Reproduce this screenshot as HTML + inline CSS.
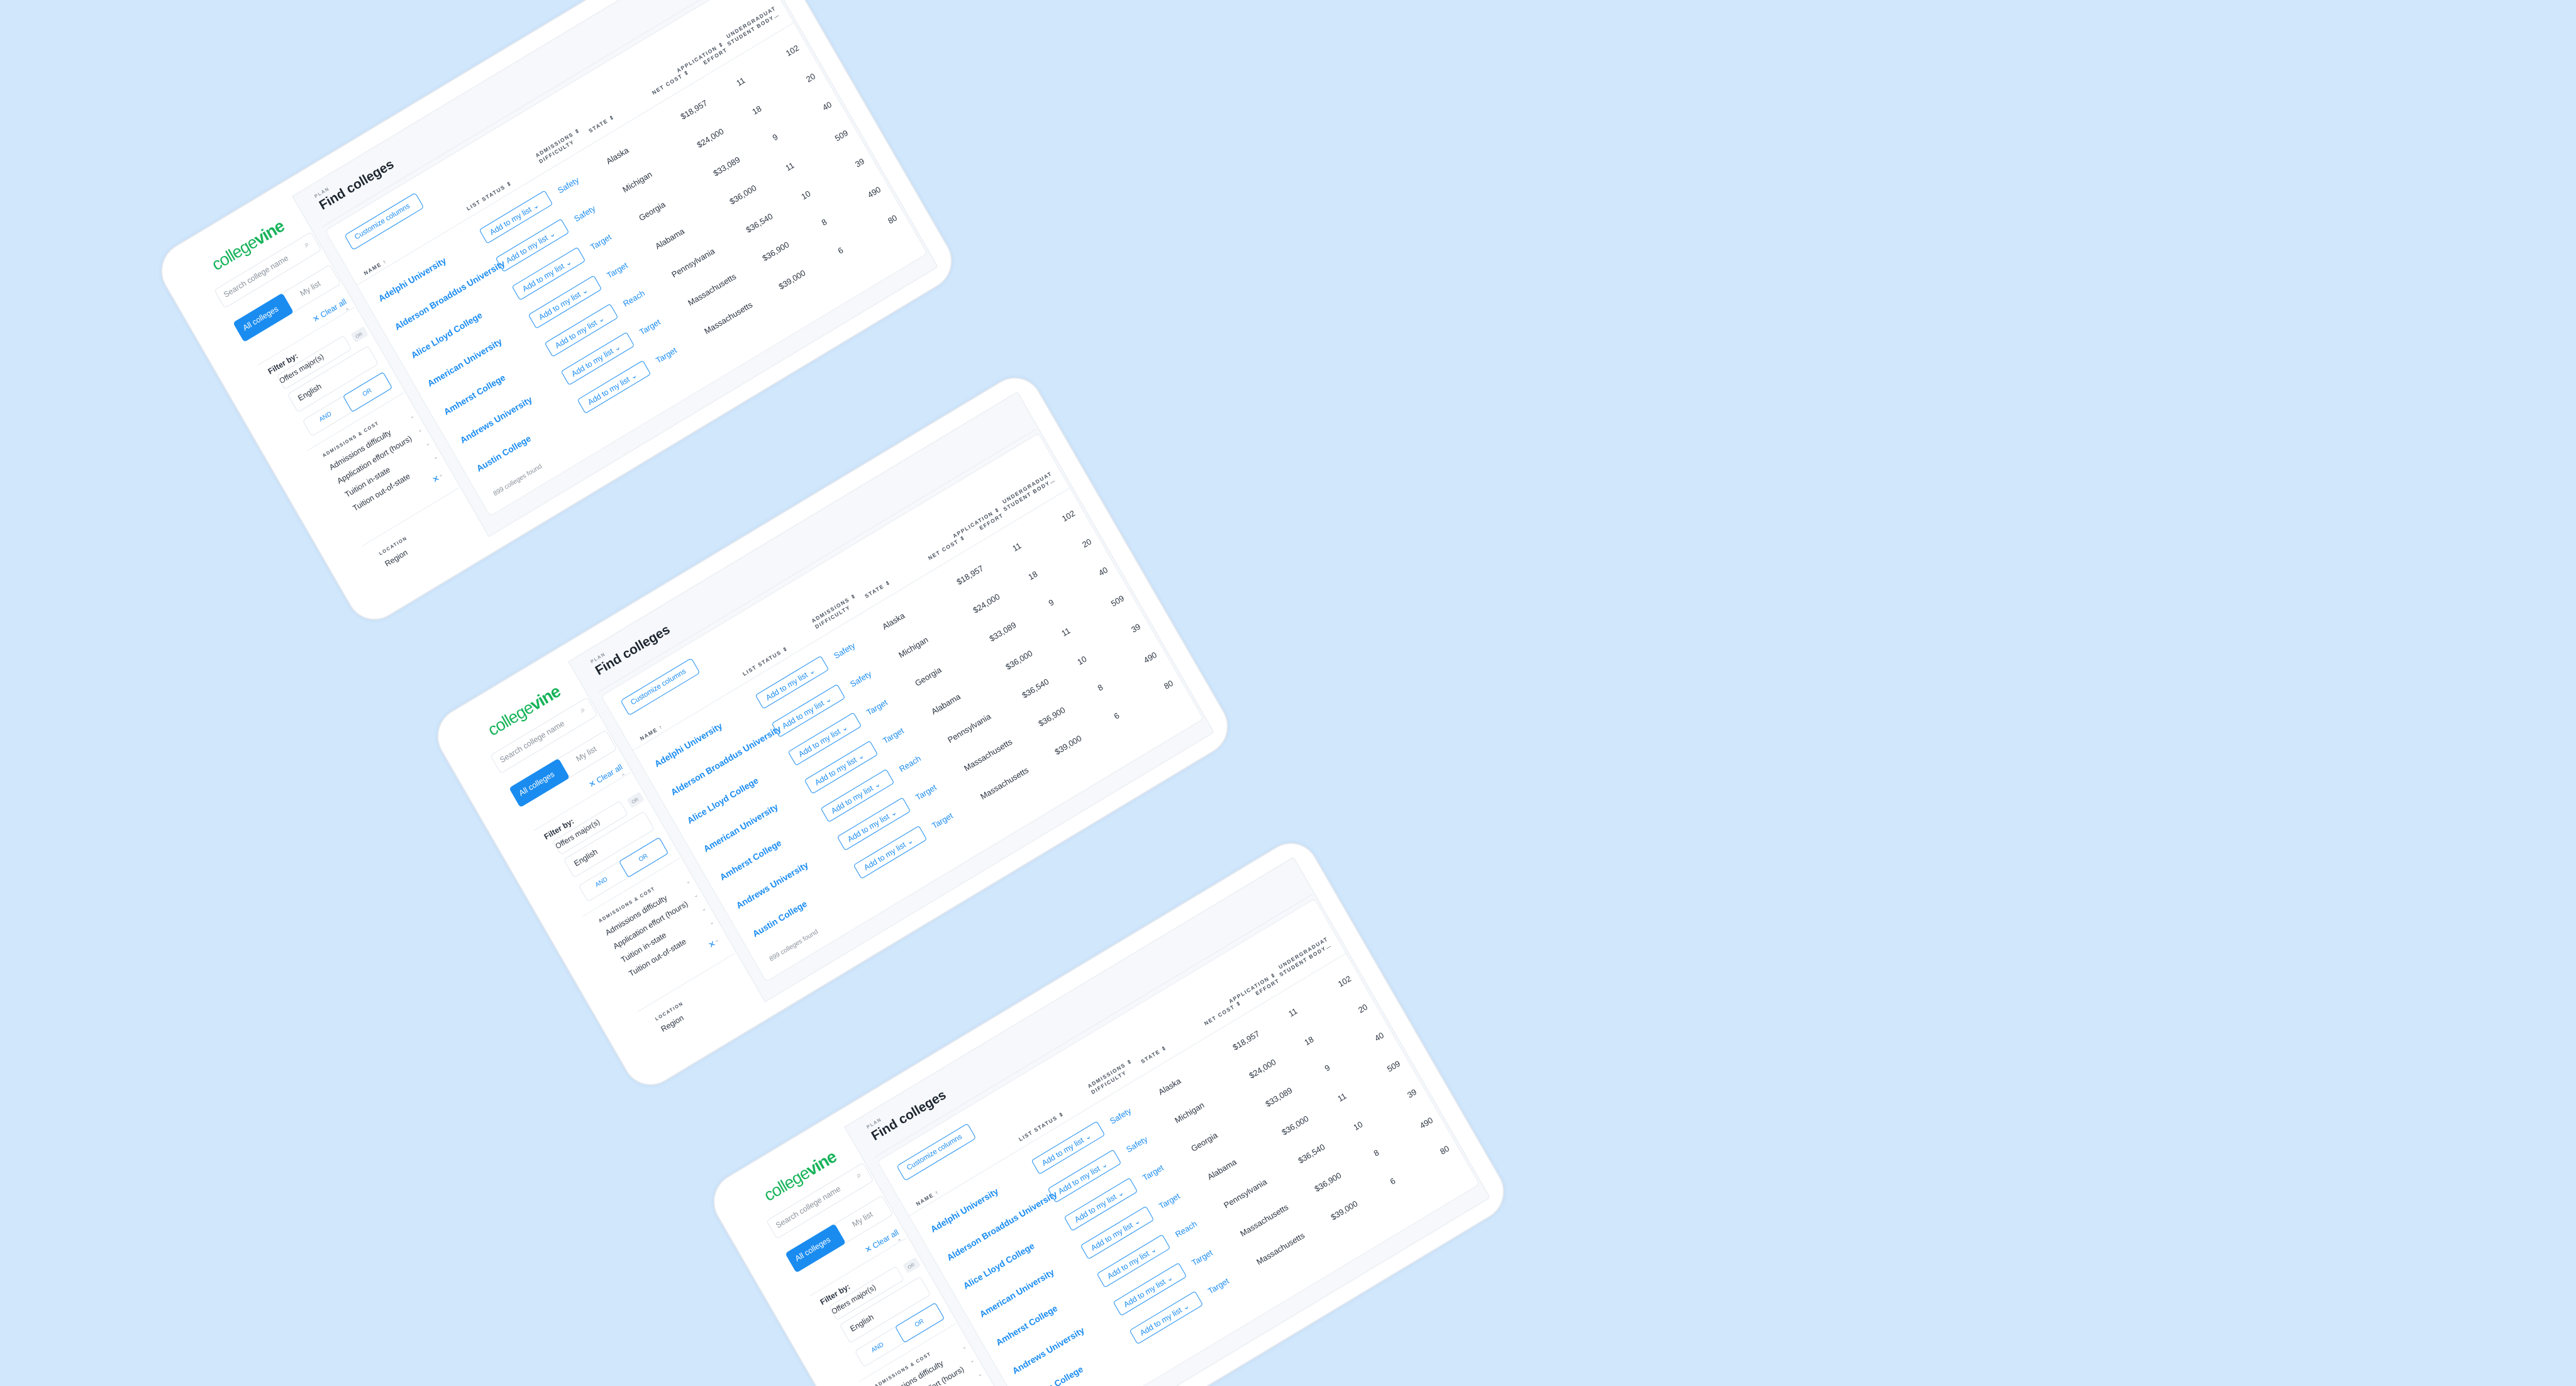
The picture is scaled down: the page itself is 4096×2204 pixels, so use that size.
<!DOCTYPE html>
<html style="width:4096px;height:2204px;overflow:hidden"><head><meta charset="utf-8">
<style>
*{box-sizing:border-box;margin:0;padding:0}
body{width:4096px;height:2204px;background:#d0e7fc;overflow:hidden;position:relative;font-family:"Liberation Sans",sans-serif}
.card{position:absolute;width:1110px;height:680px;background:#fff;border:2px solid #e2e7ee;border-radius:46px;transform:matrix(0.857,-0.515,0.5,0.866,0,0);transform-origin:center;box-shadow:0 0 6px rgba(120,150,190,.15)}
.card *{position:absolute;white-space:nowrap}
.scr{left:30px;top:26px;width:1048px;height:626px;background:#f6f8fb;border:1px solid #e5eaf0;border-radius:4px}
.side{left:30px;top:26px;width:215px;height:626px;background:#fff;border-right:1px solid #e5eaf0}
.panel{left:262px;top:100px;width:812px;height:525px;background:#fff;border:1px solid #e8edf2;border-radius:6px}
.b{color:#1a8cf0}
.t{font-size:14px;color:#2a3340}
.h{font-size:8.5px;letter-spacing:1.5px;color:#4a5360;font-weight:bold;line-height:11px}
.btn{width:122px;height:26px;border:1.5px solid #1a8cf0;border-radius:4px;color:#1a8cf0;font-size:12.5px;padding:5px 0 0 12px}
.inp{border:1px solid #e2e7ee;border-radius:5px}
.line{height:1px;background:#e8edf2}
.r{text-align:right}
</style></head><body>

<div class="card" style="left:330px;top:83px">
<div class="scr"></div><div class="side"></div><div class="panel"></div>
<div style="left:80px;top:42px;font-size:27px;color:#17b35a;letter-spacing:-1px">college<b>vine</b></div>
<div class="inp" style="left:62px;top:90px;width:180px;height:34px"></div>
<div style="left:72px;top:99px;font-size:12.5px;color:#8a929c">Search college name</div>
<div style="left:222px;top:96px;font-size:13px;color:#9aa3ad">⌕</div>
<div class="inp" style="left:62px;top:150px;width:180px;height:36px"></div>
<div style="left:62px;top:150px;width:92px;height:36px;background:#1a8cf0;border-radius:5px;color:#fff;font-size:12.5px;padding:10px 0 0 10px">All colleges</div>
<div style="left:178px;top:160px;font-size:12.5px;color:#8a929c">My list</div>
<div class="b" style="left:175px;top:205px;font-size:12.5px">✕ Clear all</div>
<div style="left:228px;top:222px;font-size:9px;color:#9aa3ad">^</div>
<div class="line" style="left:62px;top:228px;width:180px"></div>
<div style="left:72px;top:240px;font-size:12.5px;font-weight:bold;color:#2a3340">Filter by:</div>
<div style="left:80px;top:262px;font-size:12px;color:#2a3340">Offers major(s)</div>
<div class="inp" style="left:80px;top:258px;width:125px;height:26px"></div>
<div style="left:215px;top:262px;width:24px;height:16px;background:#eef1f5;border-radius:3px;font-size:7.5px;color:#8a929c;padding:4px 0 0 5px">OR</div>
<div class="inp" style="left:80px;top:292px;width:150px;height:34px"></div>
<div style="left:92px;top:301px;font-size:12.5px;color:#2a3340">English</div>
<div class="inp" style="left:80px;top:340px;width:150px;height:30px"></div>
<div style="left:155px;top:340px;width:75px;height:30px;border:1.5px solid #1a8cf0;border-radius:4px;color:#1a8cf0;font-size:10px;padding:9px 0 0 28px">OR</div>
<div class="b" style="left:104px;top:349px;font-size:10px">AND</div>
<div class="line" style="left:62px;top:385px;width:180px"></div>
<div class="h" style="left:80px;top:400px;font-size:7.5px">ADMISSIONS &amp; COST</div>
<div style="left:80px;top:416px;font-size:12.5px;color:#2a3340;line-height:25px">Admissions difficulty<br>Application effort (hours)<br>Tuition in-state<br>Tuition out-of-state</div>
<div style="left:230px;top:412px;font-size:9px;color:#9aa3ad;line-height:25px">⌄<br>⌄<br>⌄<br>⌄</div>
<div class="b" style="left:212px;top:522px;font-size:13px">✕ <span style="font-size:9px;color:#9aa3ad">⌄</span></div>
<div class="line" style="left:62px;top:560px;width:180px"></div>
<div class="h" style="left:80px;top:580px;font-size:7.5px">LOCATION</div>
<div style="left:80px;top:598px;font-size:12.5px;color:#2a3340">Region</div>
<div class="h" style="left:275px;top:40px;font-size:7.5px;color:#8a929c">PLAN</div>
<div style="left:275px;top:52px;font-size:21px;font-weight:bold;color:#1e2630">Find colleges</div>
<div class="line" style="left:262px;top:92px;width:812px"></div>
<div style="left:285px;top:122px;width:132px;height:28px;border:1.5px solid #1a8cf0;border-radius:5px;color:#1a8cf0;font-size:11.5px;padding:6px 0 0 12px">Customize columns</div>
<div class="h" style="left:282px;top:186px">NAME ↑</div>
<div class="h" style="left:475px;top:182px">LIST STATUS ⇕</div>
<div class="h" style="left:612px;top:166px">ADMISSIONS ⇕<br>DIFFICULTY</div>
<div class="h" style="left:705px;top:176px">STATE ⇕</div>
<div class="h r" style="left:800px;top:176px;width:90px">NET COST ⇕</div>
<div class="h r" style="left:840px;top:166px;width:120px">APPLICATION ⇕<br>EFFORT</div>
<div class="h r" style="left:920px;top:160px;width:140px">UNDERGRADUAT<br>STUDENT BODY…</div>
<div class="line" style="left:262px;top:200px;width:812px"></div>
<div class="b" style="left:282px;top:212px;font-size:14px;font-weight:bold;line-height:52px">Adelphi University<br>Alderson Broaddus University<br>Alice Lloyd College<br>American University<br>Amherst College<br>Andrews University<br>Austin College</div>
<div class="btn" style="left:475px;top:225px">Add to my list ⌄</div>
<div class="btn" style="left:475px;top:277px">Add to my list ⌄</div>
<div class="btn" style="left:475px;top:329px">Add to my list ⌄</div>
<div class="btn" style="left:475px;top:381px">Add to my list ⌄</div>
<div class="btn" style="left:475px;top:433px">Add to my list ⌄</div>
<div class="btn" style="left:475px;top:485px">Add to my list ⌄</div>
<div class="btn" style="left:475px;top:537px">Add to my list ⌄</div>
<div class="b" style="left:615px;top:212px;font-size:13px;line-height:52px">Safety<br>Safety<br>Target<br>Target<br>Reach<br>Target<br>Target</div>
<div class="t" style="left:705px;top:212px;font-size:13px;line-height:52px">Alaska<br>Michigan<br>Georgia<br>Alabama<br>Pennsylvania<br>Massachusetts<br>Massachusetts</div>
<div class="t r" style="left:810px;top:212px;width:80px;font-size:13px;line-height:52px">$18,957<br>$24,000<br>$33,089<br>$36,000<br>$36,540<br>$36,900<br>$39,000</div>
<div class="t r" style="left:900px;top:212px;width:60px;font-size:13px;line-height:52px">11<br>18<br>9<br>11<br>10<br>8<br>6</div>
<div class="t r" style="left:1000px;top:212px;width:60px;font-size:13px;line-height:52px">102<br>20<br>40<br>509<br>39<br>490<br>80</div>
<div style="left:285px;top:592px;font-size:10.5px;color:#8a929c">899 colleges found</div>
</div>

<div class="card" style="left:769px;top:823px">
<div class="scr"></div><div class="side"></div><div class="panel"></div>
<div style="left:80px;top:42px;font-size:27px;color:#17b35a;letter-spacing:-1px">college<b>vine</b></div>
<div class="inp" style="left:62px;top:90px;width:180px;height:34px"></div>
<div style="left:72px;top:99px;font-size:12.5px;color:#8a929c">Search college name</div>
<div style="left:222px;top:96px;font-size:13px;color:#9aa3ad">⌕</div>
<div class="inp" style="left:62px;top:150px;width:180px;height:36px"></div>
<div style="left:62px;top:150px;width:92px;height:36px;background:#1a8cf0;border-radius:5px;color:#fff;font-size:12.5px;padding:10px 0 0 10px">All colleges</div>
<div style="left:178px;top:160px;font-size:12.5px;color:#8a929c">My list</div>
<div class="b" style="left:175px;top:205px;font-size:12.5px">✕ Clear all</div>
<div style="left:228px;top:222px;font-size:9px;color:#9aa3ad">^</div>
<div class="line" style="left:62px;top:228px;width:180px"></div>
<div style="left:72px;top:240px;font-size:12.5px;font-weight:bold;color:#2a3340">Filter by:</div>
<div style="left:80px;top:262px;font-size:12px;color:#2a3340">Offers major(s)</div>
<div class="inp" style="left:80px;top:258px;width:125px;height:26px"></div>
<div style="left:215px;top:262px;width:24px;height:16px;background:#eef1f5;border-radius:3px;font-size:7.5px;color:#8a929c;padding:4px 0 0 5px">OR</div>
<div class="inp" style="left:80px;top:292px;width:150px;height:34px"></div>
<div style="left:92px;top:301px;font-size:12.5px;color:#2a3340">English</div>
<div class="inp" style="left:80px;top:340px;width:150px;height:30px"></div>
<div style="left:155px;top:340px;width:75px;height:30px;border:1.5px solid #1a8cf0;border-radius:4px;color:#1a8cf0;font-size:10px;padding:9px 0 0 28px">OR</div>
<div class="b" style="left:104px;top:349px;font-size:10px">AND</div>
<div class="line" style="left:62px;top:385px;width:180px"></div>
<div class="h" style="left:80px;top:400px;font-size:7.5px">ADMISSIONS &amp; COST</div>
<div style="left:80px;top:416px;font-size:12.5px;color:#2a3340;line-height:25px">Admissions difficulty<br>Application effort (hours)<br>Tuition in-state<br>Tuition out-of-state</div>
<div style="left:230px;top:412px;font-size:9px;color:#9aa3ad;line-height:25px">⌄<br>⌄<br>⌄<br>⌄</div>
<div class="b" style="left:212px;top:522px;font-size:13px">✕ <span style="font-size:9px;color:#9aa3ad">⌄</span></div>
<div class="line" style="left:62px;top:560px;width:180px"></div>
<div class="h" style="left:80px;top:580px;font-size:7.5px">LOCATION</div>
<div style="left:80px;top:598px;font-size:12.5px;color:#2a3340">Region</div>
<div class="h" style="left:275px;top:40px;font-size:7.5px;color:#8a929c">PLAN</div>
<div style="left:275px;top:52px;font-size:21px;font-weight:bold;color:#1e2630">Find colleges</div>
<div class="line" style="left:262px;top:92px;width:812px"></div>
<div style="left:285px;top:122px;width:132px;height:28px;border:1.5px solid #1a8cf0;border-radius:5px;color:#1a8cf0;font-size:11.5px;padding:6px 0 0 12px">Customize columns</div>
<div class="h" style="left:282px;top:186px">NAME ↑</div>
<div class="h" style="left:475px;top:182px">LIST STATUS ⇕</div>
<div class="h" style="left:612px;top:166px">ADMISSIONS ⇕<br>DIFFICULTY</div>
<div class="h" style="left:705px;top:176px">STATE ⇕</div>
<div class="h r" style="left:800px;top:176px;width:90px">NET COST ⇕</div>
<div class="h r" style="left:840px;top:166px;width:120px">APPLICATION ⇕<br>EFFORT</div>
<div class="h r" style="left:920px;top:160px;width:140px">UNDERGRADUAT<br>STUDENT BODY…</div>
<div class="line" style="left:262px;top:200px;width:812px"></div>
<div class="b" style="left:282px;top:212px;font-size:14px;font-weight:bold;line-height:52px">Adelphi University<br>Alderson Broaddus University<br>Alice Lloyd College<br>American University<br>Amherst College<br>Andrews University<br>Austin College</div>
<div class="btn" style="left:475px;top:225px">Add to my list ⌄</div>
<div class="btn" style="left:475px;top:277px">Add to my list ⌄</div>
<div class="btn" style="left:475px;top:329px">Add to my list ⌄</div>
<div class="btn" style="left:475px;top:381px">Add to my list ⌄</div>
<div class="btn" style="left:475px;top:433px">Add to my list ⌄</div>
<div class="btn" style="left:475px;top:485px">Add to my list ⌄</div>
<div class="btn" style="left:475px;top:537px">Add to my list ⌄</div>
<div class="b" style="left:615px;top:212px;font-size:13px;line-height:52px">Safety<br>Safety<br>Target<br>Target<br>Reach<br>Target<br>Target</div>
<div class="t" style="left:705px;top:212px;font-size:13px;line-height:52px">Alaska<br>Michigan<br>Georgia<br>Alabama<br>Pennsylvania<br>Massachusetts<br>Massachusetts</div>
<div class="t r" style="left:810px;top:212px;width:80px;font-size:13px;line-height:52px">$18,957<br>$24,000<br>$33,089<br>$36,000<br>$36,540<br>$36,900<br>$39,000</div>
<div class="t r" style="left:900px;top:212px;width:60px;font-size:13px;line-height:52px">11<br>18<br>9<br>11<br>10<br>8<br>6</div>
<div class="t r" style="left:1000px;top:212px;width:60px;font-size:13px;line-height:52px">102<br>20<br>40<br>509<br>39<br>490<br>80</div>
<div style="left:285px;top:592px;font-size:10.5px;color:#8a929c">899 colleges found</div>
</div>

<div class="card" style="left:1208px;top:1563px">
<div class="scr"></div><div class="side"></div><div class="panel"></div>
<div style="left:80px;top:42px;font-size:27px;color:#17b35a;letter-spacing:-1px">college<b>vine</b></div>
<div class="inp" style="left:62px;top:90px;width:180px;height:34px"></div>
<div style="left:72px;top:99px;font-size:12.5px;color:#8a929c">Search college name</div>
<div style="left:222px;top:96px;font-size:13px;color:#9aa3ad">⌕</div>
<div class="inp" style="left:62px;top:150px;width:180px;height:36px"></div>
<div style="left:62px;top:150px;width:92px;height:36px;background:#1a8cf0;border-radius:5px;color:#fff;font-size:12.5px;padding:10px 0 0 10px">All colleges</div>
<div style="left:178px;top:160px;font-size:12.5px;color:#8a929c">My list</div>
<div class="b" style="left:175px;top:205px;font-size:12.5px">✕ Clear all</div>
<div style="left:228px;top:222px;font-size:9px;color:#9aa3ad">^</div>
<div class="line" style="left:62px;top:228px;width:180px"></div>
<div style="left:72px;top:240px;font-size:12.5px;font-weight:bold;color:#2a3340">Filter by:</div>
<div style="left:80px;top:262px;font-size:12px;color:#2a3340">Offers major(s)</div>
<div class="inp" style="left:80px;top:258px;width:125px;height:26px"></div>
<div style="left:215px;top:262px;width:24px;height:16px;background:#eef1f5;border-radius:3px;font-size:7.5px;color:#8a929c;padding:4px 0 0 5px">OR</div>
<div class="inp" style="left:80px;top:292px;width:150px;height:34px"></div>
<div style="left:92px;top:301px;font-size:12.5px;color:#2a3340">English</div>
<div class="inp" style="left:80px;top:340px;width:150px;height:30px"></div>
<div style="left:155px;top:340px;width:75px;height:30px;border:1.5px solid #1a8cf0;border-radius:4px;color:#1a8cf0;font-size:10px;padding:9px 0 0 28px">OR</div>
<div class="b" style="left:104px;top:349px;font-size:10px">AND</div>
<div class="line" style="left:62px;top:385px;width:180px"></div>
<div class="h" style="left:80px;top:400px;font-size:7.5px">ADMISSIONS &amp; COST</div>
<div style="left:80px;top:416px;font-size:12.5px;color:#2a3340;line-height:25px">Admissions difficulty<br>Application effort (hours)<br>Tuition in-state<br>Tuition out-of-state</div>
<div style="left:230px;top:412px;font-size:9px;color:#9aa3ad;line-height:25px">⌄<br>⌄<br>⌄<br>⌄</div>
<div class="b" style="left:212px;top:522px;font-size:13px">✕ <span style="font-size:9px;color:#9aa3ad">⌄</span></div>
<div class="line" style="left:62px;top:560px;width:180px"></div>
<div class="h" style="left:80px;top:580px;font-size:7.5px">LOCATION</div>
<div style="left:80px;top:598px;font-size:12.5px;color:#2a3340">Region</div>
<div class="h" style="left:275px;top:40px;font-size:7.5px;color:#8a929c">PLAN</div>
<div style="left:275px;top:52px;font-size:21px;font-weight:bold;color:#1e2630">Find colleges</div>
<div class="line" style="left:262px;top:92px;width:812px"></div>
<div style="left:285px;top:122px;width:132px;height:28px;border:1.5px solid #1a8cf0;border-radius:5px;color:#1a8cf0;font-size:11.5px;padding:6px 0 0 12px">Customize columns</div>
<div class="h" style="left:282px;top:186px">NAME ↑</div>
<div class="h" style="left:475px;top:182px">LIST STATUS ⇕</div>
<div class="h" style="left:612px;top:166px">ADMISSIONS ⇕<br>DIFFICULTY</div>
<div class="h" style="left:705px;top:176px">STATE ⇕</div>
<div class="h r" style="left:800px;top:176px;width:90px">NET COST ⇕</div>
<div class="h r" style="left:840px;top:166px;width:120px">APPLICATION ⇕<br>EFFORT</div>
<div class="h r" style="left:920px;top:160px;width:140px">UNDERGRADUAT<br>STUDENT BODY…</div>
<div class="line" style="left:262px;top:200px;width:812px"></div>
<div class="b" style="left:282px;top:212px;font-size:14px;font-weight:bold;line-height:52px">Adelphi University<br>Alderson Broaddus University<br>Alice Lloyd College<br>American University<br>Amherst College<br>Andrews University<br>Austin College</div>
<div class="btn" style="left:475px;top:225px">Add to my list ⌄</div>
<div class="btn" style="left:475px;top:277px">Add to my list ⌄</div>
<div class="btn" style="left:475px;top:329px">Add to my list ⌄</div>
<div class="btn" style="left:475px;top:381px">Add to my list ⌄</div>
<div class="btn" style="left:475px;top:433px">Add to my list ⌄</div>
<div class="btn" style="left:475px;top:485px">Add to my list ⌄</div>
<div class="btn" style="left:475px;top:537px">Add to my list ⌄</div>
<div class="b" style="left:615px;top:212px;font-size:13px;line-height:52px">Safety<br>Safety<br>Target<br>Target<br>Reach<br>Target<br>Target</div>
<div class="t" style="left:705px;top:212px;font-size:13px;line-height:52px">Alaska<br>Michigan<br>Georgia<br>Alabama<br>Pennsylvania<br>Massachusetts<br>Massachusetts</div>
<div class="t r" style="left:810px;top:212px;width:80px;font-size:13px;line-height:52px">$18,957<br>$24,000<br>$33,089<br>$36,000<br>$36,540<br>$36,900<br>$39,000</div>
<div class="t r" style="left:900px;top:212px;width:60px;font-size:13px;line-height:52px">11<br>18<br>9<br>11<br>10<br>8<br>6</div>
<div class="t r" style="left:1000px;top:212px;width:60px;font-size:13px;line-height:52px">102<br>20<br>40<br>509<br>39<br>490<br>80</div>
<div style="left:285px;top:592px;font-size:10.5px;color:#8a929c">899 colleges found</div>
</div>

</body></html>
